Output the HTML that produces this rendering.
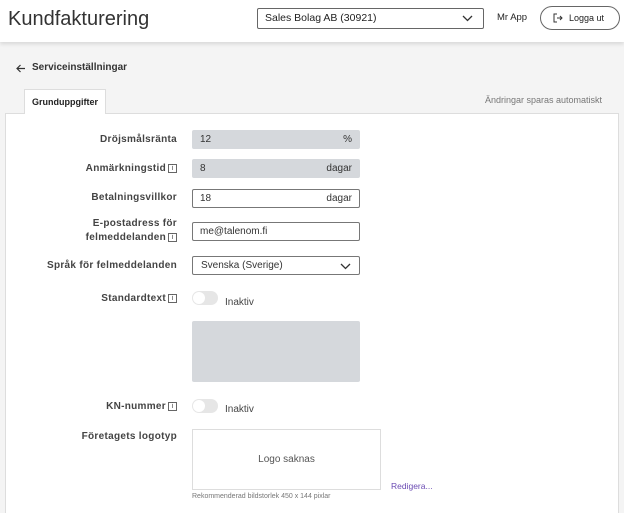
<!DOCTYPE html>
<html><head><meta charset="utf-8"><style>
*{box-sizing:border-box;margin:0;padding:0}
html,body{width:624px;height:513px;overflow:hidden}
body{background:#f4f4f4;font-family:"Liberation Sans",sans-serif;color:#222;position:relative}
.abs{position:absolute}
.hdr{left:0;top:0;width:624px;height:42px;background:#fff;box-shadow:0 2px 4px rgba(0,0,0,.12)}
.panel{left:5px;top:113px;width:614px;height:400px;background:#fff;border:1px solid #ddd;border-bottom:none}
.tab{left:24px;top:89px;width:82px;height:25px;background:#fff;border:1px solid #ddd;border-bottom:none;font-size:9px;font-weight:bold;text-align:center;line-height:24px}
.lbl{right:447px;font-size:10px;font-weight:bold;color:#444;text-align:right;letter-spacing:.3px;line-height:14px}
.inp{left:192px;width:168px;height:19px;border:1px solid #777;border-radius:2px;font-size:10px;line-height:17px;padding:0 7px;color:#333;background:#fff}
.ro{background:#d5d8dc;border-color:#d5d8dc}
.suf{float:right}
.i{display:inline-block;width:9px;height:9px;border:1px solid #666;font-size:7px;line-height:8px;text-align:center;font-weight:normal;vertical-align:middle;margin-left:2px}
.tog{left:192px;width:26px;height:14px;border-radius:7px;background:#e6e6e6}
.tog::after{content:"";position:absolute;left:1px;top:1px;width:12px;height:12px;border-radius:6px;background:#fff}
.tt{font-size:10px;color:#444}
</style></head><body>
<div class="abs hdr"></div>
<div class="abs" style="left:8px;top:8px;font-size:20px;color:#333">Kundfakturering</div>
<div class="abs" style="left:257px;top:8px;width:227px;height:21px;border:1px solid #666;border-radius:2px;font-size:10.5px;line-height:19px;padding-left:7px">Sales Bolag AB (30921)
<svg class="abs" style="right:10px;top:6px" width="11" height="7" viewBox="0 0 11 7"><path d="M1 1l4.5 4.5L10 1" stroke="#333" stroke-width="1.3" fill="none"/></svg></div>
<div class="abs" style="left:497px;top:12px;font-size:9.5px">Mr App</div>
<div class="abs" style="left:540px;top:6px;width:80px;height:24px;border:1px solid #666;border-radius:12px;font-size:9px;line-height:22px;padding-left:28px">Logga ut
<svg class="abs" style="left:12px;top:6px" width="10" height="10" viewBox="0 0 10 10"><path d="M4 1H1v8h3M4 5h5M7 3l2 2-2 2" stroke="#333" fill="none"/></svg></div>
<svg class="abs" style="left:16px;top:64px" width="10" height="9" viewBox="0 0 10 9"><path d="M9 4.5H1.5M4.5 1L1 4.5 4.5 8" stroke="#333" stroke-width="1.2" fill="none"/></svg>
<div class="abs" style="left:32px;top:62px;font-size:10px;font-weight:bold;color:#333">Serviceinställningar</div>
<div class="abs panel"></div>
<div class="abs tab">Grunduppgifter</div>
<div class="abs" style="right:22px;top:95px;font-size:9px;color:#777">Ändringar sparas automatiskt</div>

<div class="abs lbl" style="top:133px">Dröjsmålsränta</div>
<div class="abs inp ro" style="top:130px">12<span class="suf">%</span></div>
<div class="abs lbl" style="top:162px">Anmärkningstid<span class="i">i</span></div>
<div class="abs inp ro" style="top:159px">8<span class="suf">dagar</span></div>
<div class="abs lbl" style="top:191px">Betalningsvillkor</div>
<div class="abs inp" style="top:189px">18<span class="suf">dagar</span></div>
<div class="abs lbl" style="top:217px">E-postadress för<br>felmeddelanden<span class="i">i</span></div>
<div class="abs inp" style="top:222px">me@talenom.fi</div>
<div class="abs lbl" style="top:259px">Språk för felmeddelanden</div>
<div class="abs inp" style="top:256px;padding-left:8px">Svenska (Sverige)
<svg class="abs" style="right:8px;top:6px" width="11" height="7" viewBox="0 0 11 7"><path d="M1 1l4.5 4.5L10 1" stroke="#333" stroke-width="1.3" fill="none"/></svg></div>
<div class="abs lbl" style="top:292px">Standardtext<span class="i">i</span></div>
<div class="abs tog" style="top:291px"></div>
<div class="abs tt" style="left:225px;top:297px">Inaktiv</div>
<div class="abs" style="left:192px;top:321px;width:168px;height:61px;background:#d5d8dc;border-radius:2px"></div>
<div class="abs lbl" style="top:400px">KN-nummer<span class="i">i</span></div>
<div class="abs tog" style="top:399px"></div>
<div class="abs tt" style="left:225px;top:404px">Inaktiv</div>
<div class="abs lbl" style="top:430px">Företagets logotyp</div>
<div class="abs" style="left:192px;top:429px;width:189px;height:61px;border:1px solid #ddd;font-size:10px;color:#555;text-align:center;line-height:59px">Logo saknas</div>
<div class="abs" style="left:391px;top:481px;font-size:8.5px;color:#6b4bb3">Redigera...</div>
<div class="abs" style="left:192px;top:493px;font-size:7px;color:#777">Rekommenderad bildstorlek 450 x 144 pixlar</div>
</body></html>
